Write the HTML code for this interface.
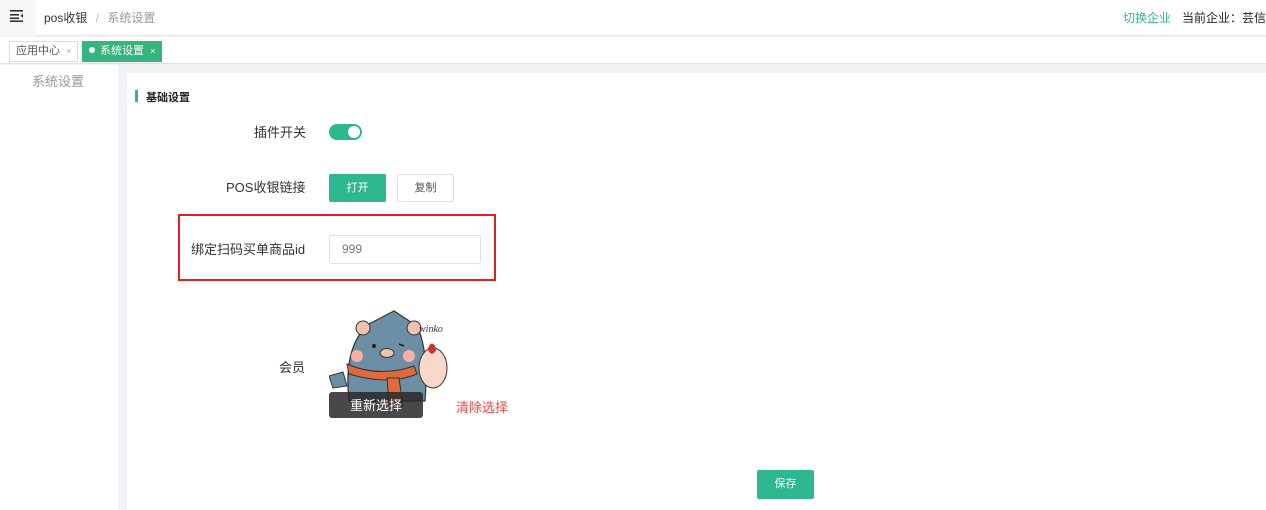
<!DOCTYPE html>
<html><head><meta charset="utf-8"><style>
*{margin:0;padding:0;box-sizing:border-box}
body{width:1266px;height:510px;overflow:hidden;font-family:"Liberation Sans","Noto Sans CJK SC",sans-serif;background:#f0f2f5;position:relative;font-size:12px;color:#333}
.abs{position:absolute}
</style></head><body>
<div class="abs" style="left:0;top:0;width:1266px;height:36px;background:#fff;border-bottom:1px solid #e8e8e8"></div>
<div class="abs" style="left:0;top:0;width:36px;height:36px;background:#f7f7f7"></div>
<svg class="abs" style="left:10px;top:10px" width="15" height="12" viewBox="0 0 15 12"><rect x="0" y="0" width="13" height="1.6" fill="#333"/><rect x="0" y="4" width="9" height="1.6" fill="#333"/><rect x="0" y="7.5" width="9" height="1.6" fill="#333"/><rect x="0" y="10.4" width="13" height="1.6" fill="#333"/><path d="M13 3.5 L10.5 5.8 L13 8z" fill="#333"/></svg>
<div class="abs" style="left:44px;top:9px;font-size:12px;color:#333">pos收银 <span style="color:#bbb;margin:0 5px">/</span> <span style="color:#999">系统设置</span></div>
<div class="abs" style="left:1123px;top:9px;color:#2eb88f">切换企业</div>
<div class="abs" style="left:1182px;top:9px;color:#222;white-space:nowrap">当前企业：芸信</div>
<div class="abs" style="left:0;top:37px;width:1266px;height:27px;background:#fff;border-bottom:1px solid #dde2ea"></div>
<div class="abs" style="left:9px;top:41px;width:69px;height:21px;border:1px solid #ddd;background:#fff;font-size:11px;line-height:19px;padding-left:6px;color:#555">应用中心 <span style="color:#aaa;font-size:9px;margin-left:3px">×</span></div>
<div class="abs" style="left:82px;top:41px;width:80px;height:21px;background:#36b47d;font-size:11px;line-height:21px;padding-left:7px;color:#fff"><span style="display:inline-block;width:6px;height:6px;border-radius:50%;background:#fff;margin-right:5px;vertical-align:1px"></span>系统设置 <span style="font-size:9px;margin-left:3px">×</span></div>
<div class="abs" style="left:0;top:65px;width:118px;height:445px;background:#fff"></div>
<div class="abs" style="left:32px;top:71px;font-size:13px;color:#999">系统设置</div>
<div class="abs" style="left:127px;top:73px;width:1139px;height:437px;background:#fff"></div>
<div class="abs" style="left:135px;top:90px;width:3px;height:12px;background:#2eb88f"></div>
<div class="abs" style="left:146px;top:89px;font-size:11px;font-weight:bold;color:#222">基础设置</div>
<div class="abs" style="left:254px;top:122px;font-size:13px;color:#333">插件开关</div>
<div class="abs" style="left:329px;top:124px;width:33px;height:16px;border-radius:8px;background:#2eb88f"><div style="position:absolute;right:2px;top:2px;width:12px;height:12px;border-radius:50%;background:#fff"></div></div>
<div class="abs" style="left:226px;top:177px;font-size:13px;color:#333">POS收银链接</div>
<div class="abs" style="left:329px;top:174px;width:57px;height:28px;background:#2eb88f;border-radius:2px;color:#fff;font-size:11px;text-align:center;line-height:28px">打开</div>
<div class="abs" style="left:397px;top:174px;width:57px;height:28px;border:1px solid #dcdfe6;border-radius:2px;color:#555;font-size:11px;text-align:center;line-height:26px">复制</div>
<div class="abs" style="left:178px;top:214px;width:318px;height:67px;border:2px solid #e02020"></div>
<div class="abs" style="left:191px;top:239px;font-size:13px;color:#333">绑定扫码买单商品id</div>
<div class="abs" style="left:329px;top:235px;width:152px;height:29px;border:1px solid #dcdfe6;border-radius:3px;padding-left:12px;line-height:27px;color:#777;font-size:12px">999</div>
<div class="abs" style="left:279px;top:357px;font-size:13px;color:#333">会员</div>
<svg class="abs" style="left:329px;top:306px" width="122" height="112" viewBox="0 0 122 112">
<rect width="122" height="112" fill="#fff"/>
<path d="M20 95 Q14 40 40 18 L65 5 L88 20 Q100 45 96 95z" fill="#6d8fa5" stroke="#333" stroke-width="1.2"/>
<circle cx="34" cy="22" r="7" fill="#f0c0b0" stroke="#333"/>
<circle cx="85" cy="22" r="7" fill="#f0c0b0" stroke="#333"/>
<circle cx="28" cy="50" r="6" fill="#f5b0a8"/>
<circle cx="80" cy="50" r="6" fill="#f5b0a8"/>
<ellipse cx="58" cy="47" rx="7" ry="4.5" fill="#f0c0b0" stroke="#333"/>
<circle cx="45" cy="40" r="2" fill="#222"/><path d="M70 38 l5 2" stroke="#222" stroke-width="1.5"/>
<path d="M18 58 Q50 72 85 60 L88 68 Q60 80 20 68z" fill="#e06a3e" stroke="#333"/>
<path d="M58 72 L70 72 L74 100 L60 100z" fill="#e06a3e" stroke="#333"/>
<ellipse cx="104" cy="62" rx="14" ry="20" fill="#f8d8c8" stroke="#333"/>
<path d="M100 40 q3 -5 6 0 q3 5 -3 8 q-6 -3 -3 -8z" fill="#c33"/>
<text x="90" y="26" font-size="10" font-family="Liberation Serif" font-style="italic" fill="#333">winko</text>
<path d="M0 70 L14 66 L18 80 L4 82z" fill="#6d8fa5" stroke="#333"/>
<rect x="0" y="86" width="94" height="26" rx="3" fill="rgba(40,40,40,0.85)"/>
<text x="47" y="104" font-size="13" fill="#fff" text-anchor="middle" font-family="Liberation Sans, Noto Sans CJK SC, sans-serif">重新选择</text>
</svg>
<div class="abs" style="left:456px;top:397px;font-size:13px;color:#f04848">清除选择</div>
<div class="abs" style="left:757px;top:470px;width:57px;height:29px;background:#2eb88f;border-radius:2px;color:#fff;font-size:11px;text-align:center;line-height:29px">保存</div>
</body></html>
